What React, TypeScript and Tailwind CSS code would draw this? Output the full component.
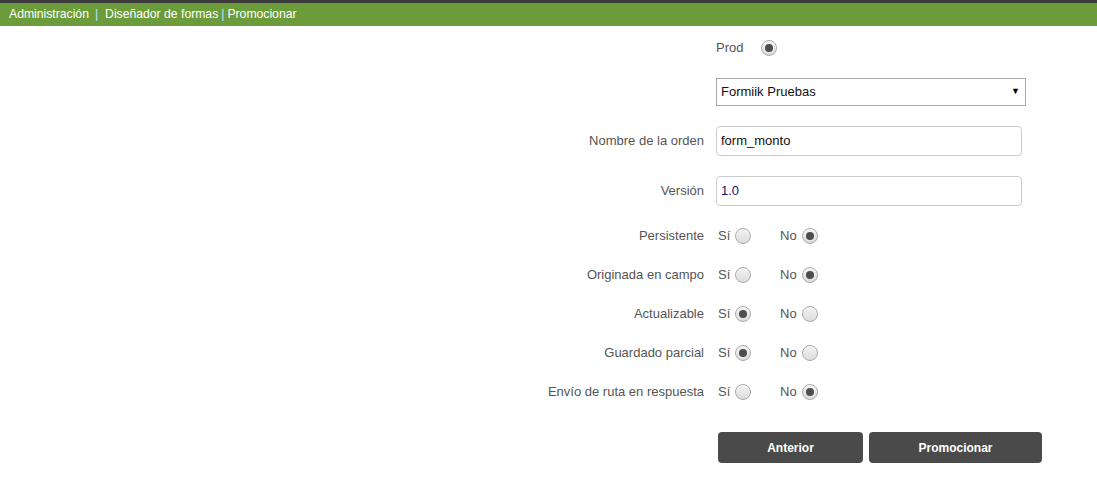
import React from "react";

function Radio({ checked }: { checked?: boolean }) {
  return (
    <span className="inline-flex h-[16px] w-[16px] items-center justify-center rounded-full border border-[#a9a9a9] bg-gradient-to-b from-[#f2f2f2] to-[#dcdcdc] shadow-[inset_0_1px_1px_rgba(255,255,255,0.8)]">
      {checked && <span className="h-[8px] w-[8px] rounded-full bg-[#4d4d4d]" />}
    </span>
  );
}

function Row({ label, children, className = "" }: { label: string; children: React.ReactNode; className?: string }) {
  return (
    <div className={`flex items-center ${className}`}>
      <div className="w-[704px] shrink-0 text-right text-[13px] text-[#555]">{label}</div>
      <div className="ml-[12px] flex items-center">{children}</div>
    </div>
  );
}

function YesNo({ label, yes, className = "" }: { label: string; yes: boolean; className?: string }) {
  return (
    <Row label={label} className={`h-[20px] ${className}`}>
      <span className="ml-[2px] w-[17px] text-[13px] text-[#555]">Sí</span>
      <Radio checked={yes} />
      <span className="ml-[29px] w-[22px] text-[13px] text-[#555]">No</span>
      <Radio checked={!yes} />
    </Row>
  );
}

export default function App() {
  return (
    <div className="min-h-[484px] bg-white font-['Liberation_Sans',Arial,sans-serif]">
      <div className="h-[3px] bg-[#3b3b3b]" />
      <div className="flex h-[23px] items-center bg-[#6b9b3b] pl-[9px] text-[12.2px] text-white">
        <span>Administración</span>
        <span className="ml-[6px] mr-[7px] text-[#bfe6f2]">|</span>
        <span>Diseñador de formas</span>
        <span className="ml-[3px] mr-[3px] text-[#bfe6f2]">|</span>
        <span>Promocionar</span>
      </div>

      <div className="flex h-[20px] mt-[12px] items-center pl-[716px]">
        <span className="w-[45px] text-[13px] text-[#555]">Prod</span>
        <Radio checked />
      </div>

      <div className="mt-[20px] pl-[716px]">
        <div className="flex h-[28px] w-[310px] items-center justify-between border border-[#aaa] bg-white pl-[4px] pr-[5px] text-[13px] text-[#111]">
          <span>Formiik Pruebas</span>
          <span className="text-[9px] text-black">▼</span>
        </div>
      </div>

      <Row label="Nombre de la orden" className="mt-[20px]">
        <div className="flex h-[30px] w-[306px] items-center rounded-[4px] border border-[#ccc] px-[4px] text-[13px] text-[#111]">
          form_monto
        </div>
      </Row>

      <Row label="Versión" className="mt-[20px]">
        <div className="flex h-[30px] w-[306px] items-center rounded-[4px] border border-[#ccc] px-[4px] text-[13px] text-[#1b1060]">
          1.0
        </div>
      </Row>

      <YesNo label="Persistente" yes={false} className="mt-[20px]" />
      <YesNo label="Originada en campo" yes={false} className="mt-[19px]" />
      <YesNo label="Actualizable" yes={true} className="mt-[19px]" />
      <YesNo label="Guardado parcial" yes={true} className="mt-[19px]" />
      <YesNo label="Envío de ruta en respuesta" yes={false} className="mt-[19px]" />

      <div className="mt-[30px] flex gap-[6px] pl-[718px]">
        <button className="h-[31px] w-[145px] rounded-[4px] bg-[#4a4a4a] text-[12px] font-bold text-white">Anterior</button>
        <button className="h-[31px] w-[173px] rounded-[4px] bg-[#4a4a4a] text-[12px] font-bold text-white">Promocionar</button>
      </div>
    </div>
  );
}
